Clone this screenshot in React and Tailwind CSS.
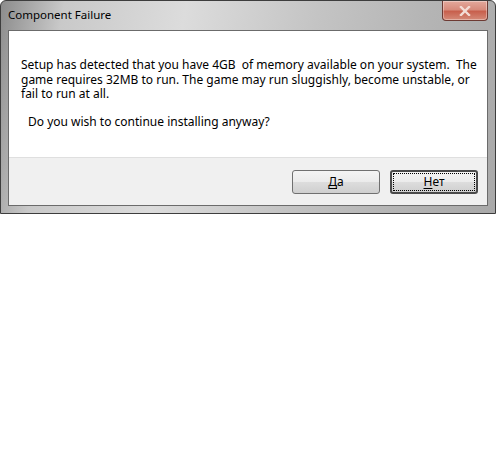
import React from "react";

function CloseButton() {
  return (
    <div className="mr-[7px] flex h-[20px] w-[46px] items-center justify-center rounded-b-[4px] border border-t-0 border-[#6d3a33] bg-[linear-gradient(to_bottom,#e3a99c_0%,#d78b7c_45%,#c8604d_55%,#d58a78_100%)] shadow-[inset_0_0_0_1px_rgba(255,255,255,0.35)]">
      <svg width="12" height="10" viewBox="0 0 12 10">
        <path d="M2 1 L10 9 M10 1 L2 9" stroke="#f3ddd6" strokeWidth="2.4" strokeLinecap="square" />
      </svg>
    </div>
  );
}

function WinButton({ label, rest, focused }) {
  return (
    <button
      className={
        "flex h-[24px] w-[88px] items-center justify-center rounded-[3px] text-[12px] text-black bg-[linear-gradient(to_bottom,#f4f4f4_0%,#ebebeb_50%,#dddddd_51%,#cfcfcf_100%)] " +
        (focused ? "border-2 border-[#4a4a4a] p-[1px]" : "border border-[#707070]")
      }
    >
      <span
        className={
          "flex h-full w-full items-center justify-center " +
          (focused ? "border border-dotted border-black" : "")
        }
      >
        <span className="underline underline-offset-2">{label}</span>
        {rest}
      </span>
    </button>
  );
}

export default function App() {
  return (
    <div className="h-[453px] w-[496px] bg-white font-['Noto_Sans',sans-serif]">
      {/* window frame */}
      <div className="flex h-[214px] w-[496px] flex-col rounded-t-[6px] border border-[#3d3d3d] bg-[linear-gradient(100deg,#8c8c8c_0%,#c9c9c9_12%,#dcdcdc_35%,#c4c4c4_60%,#b5b5b5_80%,#a9a9a9_100%)]">
        {/* title bar */}
        <div className="flex h-[29px] items-start justify-between">
          <div className="pl-[7px] pt-[6px] text-[11.5px] leading-[16px] text-black">Component Failure</div>
          <CloseButton />
        </div>

        {/* client area */}
        <div className="mx-[7px] flex flex-1 flex-col border border-[#6b6b6b] bg-white">
          <div className="flex-1 px-[12px] pt-[27px] text-[12px] leading-[14.5px] text-black">
            <p className="whitespace-pre">
              {"Setup has detected that you have 4GB  of memory available on your system.  The\ngame requires 32MB to run. The game may run sluggishly, become unstable, or\nfail to run at all."}
            </p>
            <p className="mt-[13px] pl-[7px]">Do you wish to continue installing anyway?</p>
          </div>
          <div className="flex h-[48px] items-center justify-end gap-[10px] border-t border-[#dfdfdf] bg-[#f0f0f0] pr-[9px]">
            <WinButton label="Д" rest="а" />
            <WinButton label="Н" rest="ет" focused />
          </div>
        </div>
        <div className="h-[7px]" />
      </div>
    </div>
  );
}
